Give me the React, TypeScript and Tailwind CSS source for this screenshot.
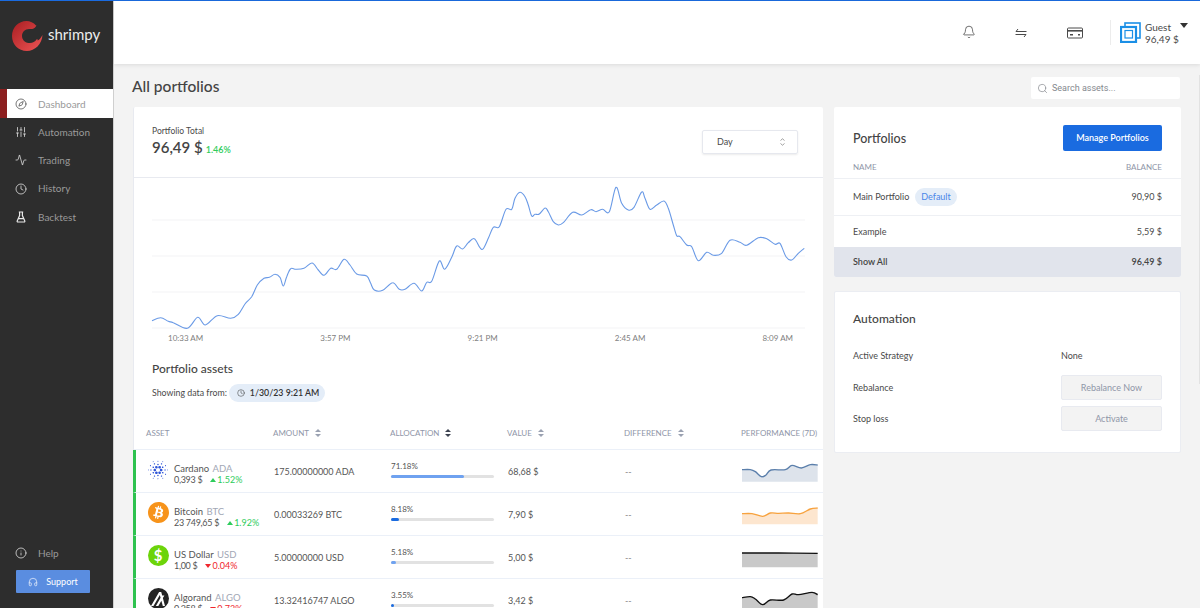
import { Activity, Bell, Clock, Compass, Headphones, Info, Search, SlidersVertical } from 'lucide-react';
import { SiAlgorand, SiBitcoin, SiCardano } from 'react-icons/si';
import type { ReactNode } from 'react';

type Pt = [number, number];

// catmull-rom through the traced points
function smooth(pts: Pt[]) {
  let d = `M${pts[0][0]} ${pts[0][1]}`;
  for (let i = 0; i < pts.length - 1; i++) {
    const p0 = pts[i - 1] || pts[i];
    const p1 = pts[i];
    const p2 = pts[i + 1];
    const p3 = pts[i + 2] || p2;
    const c1x = p1[0] + (p2[0] - p0[0]) / 6;
    const c1y = p1[1] + (p2[1] - p0[1]) / 6;
    const c2x = p2[0] - (p3[0] - p1[0]) / 6;
    const c2y = p2[1] - (p3[1] - p1[1]) / 6;
    d += ` C${c1x.toFixed(1)} ${c1y.toFixed(1)} ${c2x.toFixed(1)} ${c2y.toFixed(1)} ${p2[0].toFixed(1)} ${p2[1].toFixed(1)}`;
  }
  return d;
}

const leftTrace: Pt[] = [[66,452],[92,443],[115,454],[130,458],[172,475],[203,442],[226,465],[262,437],[302,445],[325,433],[345,402],[365,380],[382,345],[402,325],[418,322],[435,313],[450,322],[460,348],[470,320],[482,296],[498,298],[522,295],[546,279],[565,300],[582,316],[602,295],[620,298],[642,268],[660,285],[680,312],[710,318],[722,340],[733,360],[758,361],[788,338],[808,358],[825,358],[852,340],[875,363],[890,337],[905,334],[928,273],[944,298],[965,262],[980,228],[998,237],[1015,218],[1033,206],[1050,233]];
const rightTrace: Pt[] = [[10,236],[25,205],[40,172],[58,170],[78,118],[95,118],[105,85],[120,67],[135,80],[145,105],[155,138],[165,133],[178,132],[195,114],[205,125],[220,155],[235,165],[250,158],[278,127],[305,135],[332,119],[348,125],[368,118],[388,125],[408,52],[425,100],[445,120],[462,112],[485,66],[495,85],[510,118],[530,105],[552,93],[565,115],[580,165],[590,197],[600,200],[620,225],[635,230],[655,272],[680,247],[700,256],[725,250],[750,211],[780,217],[800,226],[835,203],[860,206],[885,223],[900,220],[918,260],[935,270],[955,250],[973,235]];

const chartPts: Pt[] = [
  ...leftTrace.map(([x, y]): Pt => [x / 3 - 4, y / 3 - 8]),
  ...rightTrace.map(([x, y]): Pt => [x / 3 + 346, y / 3 - 8]),
];

const navItems = [
  { label: 'Automation', icon: <SlidersVertical size={12} strokeWidth={1.5} /> },
  { label: 'Trading', icon: <Activity size={12} strokeWidth={1.5} /> },
  { label: 'History', icon: <Clock size={12} strokeWidth={1.5} /> },
  { label: 'Backtest', icon: <FlaskIcon /> },
];

function FlaskIcon() {
  return (
    <svg width="12" height="12" viewBox="0 0 12 12" fill="none" stroke="currentColor" strokeWidth="1.2">
      <path d="M3.8 1h4.400M4.600 1v3.600L2.200 10c-.2.5.1 1 .6 1h6.400c.5 0 .8-.5.6-1L7.400 4.600V1M3.400 7.600h5.200" />
    </svg>
  );
}

function SwapIcon() {
  return (
    <svg width="14" height="14" viewBox="0 0 14 14" fill="none" stroke="#4a4a4a" strokeWidth="1">
      <path d="M4 3 2 5.500H12.500M10 11 12 8.500H1.500" />
    </svg>
  );
}

function CardIcon() {
  return (
    <svg width="16" height="12" viewBox="0 0 16 12" fill="none" stroke="#4a4a4a" strokeWidth="1">
      <rect x="0.5" y="1" width="15" height="10" rx="1" />
      <rect x="1" y="3" width="14" height="1.600" fill="#4a4a4a" stroke="none" />
      <path d="M3 7.800h3M11 7.800h2" strokeWidth="1.400" />
    </svg>
  );
}

function Sort({ active }: { active?: boolean }) {
  const c = active ? '#3c4250' : '#9aa1b1';
  return (
    <svg width="6" height="8" viewBox="0 0 6 8" className="ml-[6px]">
      <path d="M3 0 6 3H0Z" fill={c} />
      <path d="M3 8 0 5H6Z" fill={c} />
    </svg>
  );
}

function Coin({ id }: { id: string }) {
  if (id === 'ADA') return <SiCardano size={20} color="#2f55d8" />;
  if (id === 'BTC')
    return (
      <div className="h-[21px] w-[21px] rounded-full bg-white">
        <SiBitcoin size={21} color="#f7931a" />
      </div>
    );
  if (id === 'USD')
    return (
      <div className="flex h-[21px] w-[21px] items-center justify-center rounded-full bg-[#6cd40a] text-[15px] font-bold text-white">$</div>
    );
  return (
    <div className="flex h-[21px] w-[21px] items-center justify-center rounded-full bg-[#252525] text-white">
      <SiAlgorand size={14} />
    </div>
  );
}

const assets = [
  {
    id: 'ADA', name: 'Cardano', price: '0,393 $', change: '1.52%', up: true, amount: '175.00000000 ADA', pct: '71.18%', barW: 73, barC: 'bg-[#6fa2f0]', value: '68,68 $',
    line: [[0,59],[25,59],[40,65],[58,80],[72,75],[87,60],[130,59],[150,46],[178,54],[205,44],[227,45]] as Pt[], bottom: 95, stroke: '#5b7fab', fill: '#dde3eb',
  },
  {
    id: 'BTC', name: 'Bitcoin', price: '23 749,65 $', change: '1.92%', up: true, amount: '0.00033269 BTC', pct: '8.18%', barW: 8, barC: 'bg-[#1a6be0]', value: '7,90 $',
    line: [[0,62],[30,62],[62,70],[85,60],[110,61],[140,60],[175,62],[205,48],[227,45]] as Pt[], bottom: 94, stroke: '#f7a23e', fill: '#fde6cf',
  },
  {
    id: 'USD', name: 'US Dollar', price: '1,00 $', change: '0.04%', up: false, amount: '5.00000000 USD', pct: '5.18%', barW: 5, barC: 'bg-[#6fa2f0]', value: '5,00 $',
    line: [[0,51],[110,51],[227,52]] as Pt[], bottom: 94, stroke: '#111111', fill: '#c9c9c9',
  },
  {
    id: 'ALGO', name: 'Algorand', price: '0,258 $', change: '0.73%', up: false, amount: '13.32416747 ALGO', pct: '3.55%', barW: 3, barC: 'bg-[#1a6be0]', value: '3,42 $',
    line: [[0,56],[25,53],[40,60],[62,77],[85,63],[125,63],[150,45],[170,47],[210,40],[227,47]] as Pt[], bottom: 94, stroke: '#111111', fill: '#c9c9c9',
  },
];

function Spark({ line, bottom, stroke, fill }: { line: Pt[]; bottom: number; stroke: string; fill: string }) {
  const d = smooth(line);
  return (
    <svg width="76" height="43" viewBox="0 0 228 129" className="block">
      <path d={`${d} L227 ${bottom} L0 ${bottom}Z`} fill={fill} />
      <path d={d} fill="none" stroke={stroke} strokeWidth="4" />
    </svg>
  );
}

function Head({ children, sort, active }: { children: ReactNode; sort?: boolean; active?: boolean }) {
  return (
    <div className="flex items-center whitespace-nowrap pt-px text-[8px] uppercase text-[#8f96a8]">
      {children}
      {sort && <Sort active={active} />}
    </div>
  );
}

export default function App() {
  return (
    <div className="flex h-[608px] flex-col overflow-hidden bg-[#f3f3f3] font-['Lato',sans-serif] text-[10px] text-[#4a4a4a]">
      <div className="h-px shrink-0 bg-[#1a6be0]" />
      <div className="flex min-h-0 flex-1">
        {/* Sidebar */}
        <aside className="flex w-[114px] shrink-0 flex-col border-r border-[#cfcfcf] bg-[#2d2d2d] pb-[15px]">
          <div className="flex h-[88px] items-start gap-[5px] pl-[11px] pt-[19px]">
            <svg width="32" height="32" viewBox="0 0 32 32">
              <defs>
                <linearGradient id="logoG" x1="0" y1="0" x2="1" y2="1">
                  <stop offset="0" stopColor="#a81e22" />
                  <stop offset="1" stopColor="#ef5555" />
                </linearGradient>
              </defs>
              <path d="M25 5.500C22.500 2.500 19 1 15.500 1 7.500 1 1 7.500 1 16s6.500 15 14.800 15C24 31 31 24 31.500 15c-2 3.500-3.500 5-5 5.500.5-1-.2-1.500-1-1-1.500 2.500-4.500 4-8 3.500-3.800-.5-6.500-3.500-6.500-7 0-4 3-7 7-7 3 0 5 .5 7.500-3.500Z" fill="url(#logoG)" />
            </svg>
            <span className="mt-[2px] text-[15px] leading-[24px] text-[#ececec]">shrimpy</span>
          </div>
          <div className="flex h-[29px] bg-white">
            <div className="w-[7px] bg-[#8c1f1f]" />
            <div className="flex flex-1 items-center gap-[11px] pl-[8px] pt-px text-[#9a9a9a]">
              <span className="text-[#4a4a4a]"><Compass size={12} strokeWidth={1.5} /></span>
              <span className="text-[10px]">Dashboard</span>
            </div>
          </div>
          {navItems.map((item) => (
            <div key={item.label} className="flex h-[28.3px] items-center gap-[11px] pl-[15px] text-[#9a9a9a]">
              <span className="text-[#e8e8e8]">{item.icon}</span>
              <span className="text-[10px]">{item.label}</span>
            </div>
          ))}
          <div className="mt-auto flex h-[24px] items-center gap-[11px] pl-[15px] text-[#9a9a9a]">
            <span className="text-[#e8e8e8]"><Info size={12} strokeWidth={1.5} /></span>
            <span className="text-[10px]">Help</span>
          </div>
          <div className="ml-[16px] mt-[5px] flex h-[23px] w-[74px] items-center justify-center gap-[8px] rounded-[1px] bg-[#5a8de0] text-white">
            <Headphones size={10} strokeWidth={1.5} />
            <span className="text-[9px]">Support</span>
          </div>
        </aside>

        <div className="relative flex min-w-0 flex-1 flex-col">
          {/* Top bar */}
          <header className="flex h-[63px] shrink-0 items-center justify-end bg-white pr-[10px] shadow-[0_1px_4px_rgba(0,0,0,0.1)]">
            <Bell size={14} strokeWidth={1.1} className="mb-[2px] mr-[38px] text-[#222]" />
            <div className="mr-[39px]"><SwapIcon /></div>
            <div className="mr-[27px]"><CardIcon /></div>
            <div className="mr-[9px] h-[25px] w-px bg-[#ececec]" />
            <svg width="21" height="21" viewBox="0 0 21 21" fill="none" stroke="#1b8fe6" className="mr-[4px]">
              <rect x="5" y="1" width="15" height="15" strokeWidth="1.600" />
              <rect x="1" y="5" width="15" height="15" strokeWidth="2.200" fill="white" />
              <rect x="5" y="8.500" width="7.500" height="7.500" strokeWidth="1.200" />
            </svg>
            <div className="w-[45px] text-[10px] leading-[12px]">
              <div className="flex items-start justify-between">
                <span>Guest</span>
                <svg width="8" height="5" viewBox="0 0 8 5" className="mr-[2px] mt-[2px]"><path d="M0 0h8L4 5Z" fill="#333" /></svg>
              </div>
              <div>96,49 $</div>
            </div>
          </header>

          <div className="absolute right-0 top-[74px] h-[309px] w-px bg-[#e2e2e2]" />

          {/* Content */}
          <main className="flex min-h-0 flex-1 flex-col pl-[19px] pr-[19px]">
            <div className="flex h-[43px] shrink-0 items-center justify-between pt-[3px]">
              <h1 className="-ml-px text-[15.500px] font-medium text-[#444]">All portfolios</h1>
              <div className="mr-px mt-[2px] flex h-[22px] w-[149px] items-center gap-[4px] rounded-[2px] bg-white pl-[6px] text-[9px] text-[#85888e]">
                <Search size={11} strokeWidth={1.5} />
                <span className="pt-px font-['Roboto',sans-serif]">Search assets...</span>
              </div>
            </div>

            <div className="flex min-h-0 flex-1 items-start gap-[11px]">
              {/* Left card */}
              <section className="w-[690px] shrink-0 rounded-t-[2px] border-l border-[#e8eaf0] bg-white">
                <div className="flex h-[71px] items-start justify-between border-b border-[#e8eaf0] pl-[18px] pr-[25px] pt-[19px]">
                  <div>
                    <div className="text-[8.500px] leading-[11px]">Portfolio Total</div>
                    <div className="flex items-baseline gap-[3px] leading-[20px]">
                      <span className="text-[15px] font-semibold text-[#444]">96,49 $</span>
                      <span className="text-[9px] font-semibold text-[#2ecc5b]">1.46%</span>
                    </div>
                  </div>
                  <div className="mt-[4px] flex h-[24px] w-[96px] items-center justify-between rounded-[2px] border border-[#e6e8ee] pl-[14px] pr-[12px] shadow-[0_1px_2px_rgba(0,0,0,0.08)]">
                    <span className="text-[9px]">Day</span>
                    <svg width="5" height="8" viewBox="0 0 5 8" fill="none" stroke="#777" strokeWidth="0.7">
                      <path d="M.5 2.500 2.500.8l2 1.700M.5 5.500l2 1.700 2-1.700" />
                    </svg>
                  </div>
                </div>

                <svg width="689" height="153" viewBox="0 0 689 153" className="block">
                  {[42, 78, 114, 150].map((y) => (
                    <line key={y} x1="18" x2="671" y1={y} y2={y} stroke="#f3f3f5" />
                  ))}
                  <path d={smooth(chartPts)} fill="none" stroke="#6a9ae6" strokeWidth="1.1" />
                </svg>
                <div className="flex h-[14px] items-center justify-between pl-[34px] pr-[30px] text-[8px] text-[#808080]">
                  <span>10:33 AM</span>
                  <span>3:57 PM</span>
                  <span>9:21 PM</span>
                  <span>2:45 AM</span>
                  <span>8:09 AM</span>
                </div>

                <div className="pl-[18px] pt-[17px]">
                  <h2 className="text-[12px] font-medium leading-[14px] text-[#444]">Portfolio assets</h2>
                  <div className="mt-[8px] flex items-center gap-[2px] text-[8.800px]">
                    <span>Showing data from:</span>
                    <div className="flex h-[18px] items-center gap-[5px] rounded-full bg-[#e4edf8] pl-[8px] pr-[6px] text-[#333]">
                      <Clock size={8} strokeWidth={1.5} />
                      <span className="font-semibold">1/30/23 9:21 AM</span>
                    </div>
                  </div>
                </div>

                <div className="mt-[13px] grid h-[35px] grid-cols-[127px_117px_117px_117px_117px_1fr] items-center border-b border-[#ebf0f8] pl-[12px]">
                  <Head>Asset</Head>
                  <Head sort>Amount</Head>
                  <Head sort active>Allocation</Head>
                  <Head sort>Value</Head>
                  <Head sort>Difference</Head>
                  <Head>Performance (7D)</Head>
                </div>

                {assets.map((a) => (
                  <div key={a.id} className="-ml-px grid h-[43px] grid-cols-[137px_117px_117px_117px_117px_1fr] items-center border-b border-l-[3px] border-b-[#ebf0f8] border-l-[#2ec24f] text-[9px] text-[#555]">
                    <div className="flex items-center">
                      <div className="mb-[4px] flex w-[38px] justify-center pl-[6px]"><Coin id={a.id} /></div>
                      <div className="whitespace-nowrap pt-[5px] leading-[11.500px]">
                        <div className="text-[9.500px]">
                          {a.name} <span className="ml-[1px] text-[#a2a7b5]">{a.id}</span>
                        </div>
                        <div className="flex items-center">
                          <span className="tracking-[-0.3px]">{a.price}</span>
                          <svg width="6" height="4" viewBox="0 0 6 4" className="ml-[8px] mr-[1px]">
                            <path d={a.up ? 'M3 0 6 4H0Z' : 'M3 4 0 0H6Z'} fill={a.up ? '#2ecc5b' : '#f0272d'} />
                          </svg>
                          <span className={a.up ? 'text-[#2ecc5b]' : 'text-[#f0272d]'}>{a.change}</span>
                        </div>
                      </div>
                    </div>
                    <div className="pl-[1px]">{a.amount}</div>
                    <div className="mb-[5px] pl-[1px]">
                      <div className="text-[8px] leading-[10px]">{a.pct}</div>
                      <div className="mt-[4px] h-[3px] w-[103px] rounded-full bg-[#e2e2e2]">
                        <div className={`h-[3px] rounded-full ${a.barC}`} style={{ width: a.barW }} />
                      </div>
                    </div>
                    <div className="pl-[1px]">{a.value}</div>
                    <div className="pl-[1px] text-[#888]">--</div>
                    <div className="pl-[1px]">
                      <Spark line={a.line} bottom={a.bottom} stroke={a.stroke} fill={a.fill} />
                    </div>
                  </div>
                ))}
              </section>

              {/* Right column */}
              <div className="flex w-[347px] shrink-0 flex-col gap-[14px]">
                <section className="overflow-hidden rounded-[2px] bg-white">
                  <div className="flex h-[44px] items-center justify-between px-[19px] pt-[18px]">
                    <h2 className="pt-[2px] text-[12.500px] font-medium text-[#444]">Portfolios</h2>
                    <div className="flex h-[26px] w-[99px] items-center justify-center rounded-[2px] bg-[#1a6be0] text-[9px] font-semibold text-white">Manage Portfolios</div>
                  </div>
                  <div className="flex h-[27px] items-end justify-between px-[19px] pb-[5px] text-[8px] uppercase text-[#8f96a8]">
                    <span>Name</span>
                    <span>Balance</span>
                  </div>
                  <div className="flex h-[38px] items-center justify-between border-y border-[#eef0f4] px-[19px] text-[9px]">
                    <div className="flex items-center gap-[6px]">
                      <span>Main Portfolio</span>
                      <span className="flex h-[18px] items-center rounded-full bg-[#e4edf8] px-[6px] text-[#4a86e8]">Default</span>
                    </div>
                    <span>90,90 $</span>
                  </div>
                  <div className="flex h-[31px] items-center justify-between px-[19px] text-[9px]">
                    <span>Example</span>
                    <span>5,59 $</span>
                  </div>
                  <div className="flex h-[30px] items-center justify-between bg-[#e1e4ec] px-[19px] text-[9px] font-semibold text-[#444]">
                    <span>Show All</span>
                    <span>96,49 $</span>
                  </div>
                </section>

                <section className="h-[162px] rounded-[2px] border border-[#ebedf2] bg-white px-[18px] text-[9px]">
                  <h2 className="mt-[20px] text-[12px] font-medium leading-[14px] text-[#444]">Automation</h2>
                  <div className="mt-[17px] grid grid-cols-[208px_101px] items-center gap-y-[6px]">
                    <span>Active Strategy</span>
                    <span className="flex h-[26px] items-center">None</span>
                    <span>Rebalance</span>
                    <div className="flex h-[25px] items-center justify-center rounded-[2px] border border-[#e8eaf0] bg-[#f3f3f3] text-[#8f96a8]">Rebalance Now</div>
                    <span>Stop loss</span>
                    <div className="flex h-[25px] items-center justify-center rounded-[2px] border border-[#e8eaf0] bg-[#f3f3f3] text-[#8f96a8]">Activate</div>
                  </div>
                </section>
              </div>
            </div>
          </main>
        </div>
      </div>
    </div>
  );
}
